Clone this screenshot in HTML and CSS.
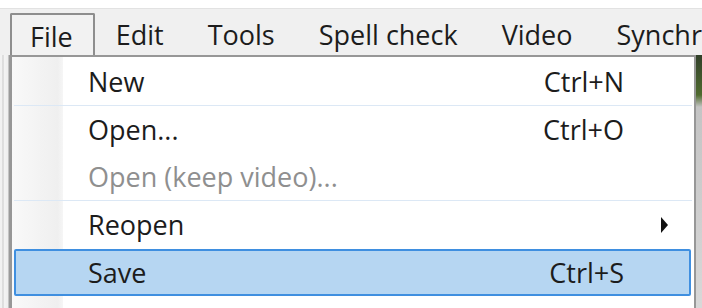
FILE: index.html
```html
<!DOCTYPE html>
<html>

<head>
    <title>File menu</title>
    <link rel="stylesheet" href="styles.css">
</head>

<body>
    <div class="menubar">
        <div class="menubar-item open">File</div>
        <div class="menubar-item">Edit</div>
        <div class="menubar-item">Tools</div>
        <div class="menubar-item">Spell check</div>
        <div class="menubar-item">Video</div>
        <div class="menubar-item">Synchronization</div>
    </div>

    <div class="workspace">
        <div class="side side-left"></div>

        <!-- 下拉菜单 -->
        <div class="dropdown">
            <div class="row">
                <span class="label">New</span>
                <span class="shortcut">Ctrl+N</span>
            </div>
            <div class="separator"></div>
            <div class="row">
                <span class="label">Open...</span>
                <span class="shortcut">Ctrl+O</span>
            </div>
            <div class="row disabled">
                <span class="label">Open (keep video)...</span>
            </div>
            <div class="separator"></div>
            <div class="row">
                <span class="label">Reopen</span>
                <span class="arrow"></span>
            </div>
            <div class="row selected">
                <span class="label">Save</span>
                <span class="shortcut">Ctrl+S</span>
            </div>
        </div>

        <div class="side side-right"></div>
    </div>
</body>

</html>
```

FILE: styles.css
```css
body {
    margin: 0;
    background-color: #ffffff;
    font-family: "Open Sans", "Noto Sans", sans-serif;
    font-size: 27px;
    color: #1c1c1c;
    overflow: hidden;
}

/* 菜单栏 */
.menubar {
    display: flex;
    align-items: flex-end;
    margin-top: 8px;
    height: 46px;
    padding-left: 10px;
    background-color: #f0f0f0;
    border-top: 1px solid #e2e2e2;
    white-space: nowrap;
    overflow: hidden;
}

.menubar-item {
    height: 42px;
    line-height: 44px;
    padding: 0 22px;
    box-sizing: border-box;
}

.menubar-item.open {
    position: relative;
    z-index: 1;
    padding: 0 20px 0 18px;
    margin-right: 0;
    margin-bottom: -2px;
    height: 44px;
    background-color: #f2f2f2;
    border: 2px solid #8e8e8e;
    border-bottom: none;
    border-radius: 2px 2px 0 0;
}

.menubar-item.open + .menubar-item {
    padding-left: 21px;
}

/* 下方区域 */
.workspace {
    display: flex;
    height: 260px;
}

.side-left {
    width: 10px;
    background: linear-gradient(to right, #f2f2f2 0, #f2f2f2 2px, #c9c9c9 3px, #f4f4f4 4px, #eeeeee 8px, #9a9a9a 9px);
}

.side-right {
    flex: 1;
    background: linear-gradient(to bottom, #31402a 0, #4f6a2e 40px, #c4c4c4 52px, #d9d9d9 100%);
}

/* 下拉菜单 */
.dropdown {
    width: 686px;
    box-sizing: border-box;
    border: 2px solid #979797;
    border-bottom: none;
    padding-top: 1px;
    background: linear-gradient(to right, #f9f9f9, #efefef 90%, #f6f6f6) 0 0 / 51px 100% no-repeat, #ffffff;
}

.row {
    display: flex;
    align-items: center;
    height: 47px;
    padding: 0 26px 0 76px;
}

.label {
    flex: 1;
}

.shortcut {
    margin-right: 44px;
}

.disabled {
    color: #8f8f8f;
}

.arrow {
    width: 0;
    height: 0;
    margin-right: 0;
    border-top: 8px solid transparent;
    border-bottom: 8px solid transparent;
    border-left: 7px solid #111111;
}

.separator {
    height: 1px;
    margin: 0 2px 0 2px;
    background-color: #dce8f5;
}

.row.selected {
    height: 47px;
    margin: 1px 3px 0 2px;
    padding: 0 21px 0 72px;
    box-sizing: border-box;
    background-color: #b6d6f2;
    border: 2px solid #3f8fe0;
    border-radius: 2px;
}
```
